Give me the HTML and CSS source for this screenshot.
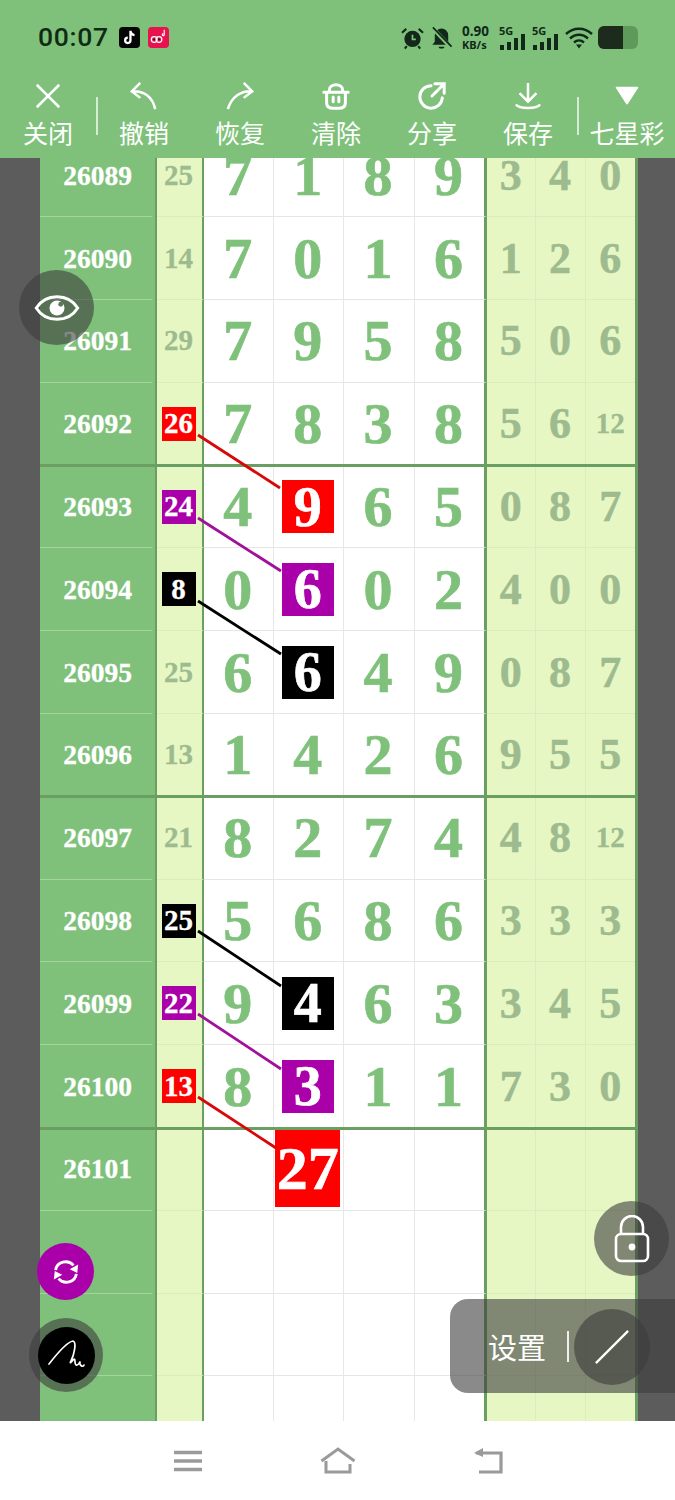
FILE: index.html
```html
<!DOCTYPE html>
<html lang="zh">
<head>
<meta charset="utf-8">
<title>七星彩</title>
<link rel="stylesheet" href="styles.css">
</head>
<body>
<div class="phone">
  <header class="top">
    <div class="status">
      <span class="time">00:07</span>
      <svg class="app" viewBox="0 0 22 22"><rect width="22" height="22" rx="4" fill="#050505"/><path d="M12 4v10a2.8 2.8 0 1 1-2.8-2.8M12 4.500c.4 2.400 1.900 3.800 4.300 4" fill="none" stroke="#fff" stroke-width="2.400"/></svg>
      <svg class="app" viewBox="0 0 22 22"><rect width="22" height="22" rx="4" fill="#e8124f"/><circle cx="6.500" cy="13" r="3" fill="none" stroke="#fff" stroke-width="1.300"/><circle cx="11.500" cy="13" r="3" fill="none" stroke="#fff" stroke-width="1.300"/><circle cx="6.500" cy="13" r="1" fill="#111"/><circle cx="11.500" cy="13" r="1" fill="#111"/><path d="M17 3v5a1 1 0 1 1-1-1" fill="none" stroke="#fff" stroke-width="1.200"/></svg>
      <span class="grow"></span>
      <svg class="si alarm" viewBox="0 0 24 24"><circle cx="12" cy="13" r="8.500" fill="#12291a"/><path d="M12 8.500V13.500H15.500" fill="none" stroke="#7fc17b" stroke-width="1.800"/><path d="M1 6.500 5.500 2.500M23 6.500 18.500 2.500M6 20.500 4 23M18 20.500 20 23" stroke="#12291a" stroke-width="2.200"/></svg>
      <svg class="si bell" viewBox="0 0 24 24"><path d="M12 2a7 7 0 0 1 7 7v7l2.500 3h-19L5 16V9a7 7 0 0 1 7-7zM9 21h6a3 2 0 0 1-6 0z" fill="#12291a"/><path d="M2.500 1.500 22 22" stroke="#7fc17b" stroke-width="4"/><path d="M3 1 22.500 21" stroke="#12291a" stroke-width="1.800"/></svg>
      <span class="speed"><b>0.90</b><i>KB/s</i></span>
      <span class="net"><em>5G</em><svg viewBox="0 0 26 16"><path d="M1 11h4v5H1zM8 8h4v8H8zM15 4h4v12h-4zM22 0h4v16h-4z" fill="#12291a"/></svg></span>
      <span class="net"><em>5G</em><svg viewBox="0 0 26 16"><path d="M1 11h4v5H1zM8 8h4v8H8zM15 4h4v12h-4zM22 0h4v16h-4z" fill="#12291a"/></svg></span>
      <svg class="wifi" viewBox="0 0 28 22"><path d="M1 7.500C8.500.5 19.500.5 27 7.500M5 12c5.500-5 12.500-5 18 0M9 16c3-2.600 7-2.600 10 0" fill="none" stroke="#12291a" stroke-width="2.400"/><path d="M11 18h6l-3 4z" fill="#12291a"/></svg>
      <span class="batt"><span class="fill"></span></span>
    </div>
    <nav class="tools">
      <div class="tool"><svg viewBox="0 0 32 32"><path d="M4 4 28 28M28 4 4 28"/></svg><span>关闭</span></div>
      <div class="tool bar"><svg viewBox="0 0 32 32"><path d="M12 2 3 11l9 7M3 11c12-1 22 5 25 19"/></svg><span>撤销</span></div>
      <div class="tool"><svg viewBox="0 0 32 32"><path d="M20 2l9 9-9 7M29 11C17 10 7 17 3 30"/></svg><span>恢复</span></div>
      <div class="tool"><svg viewBox="0 0 32 32"><path class="thick" d="M3 12H29M9 12V9a7 5 0 0 1 14 0v3M6 12v11c0 4 2 6 6 6h8c4 0 6-2 6-6V12M13 17v5M19 17v5"/></svg><span>清除</span></div>
      <div class="tool"><svg viewBox="0 0 32 32"><path class="thick" d="M15 5A12 12 0 1 0 27 18M19 3h10v10M29 3 16 16"/></svg><span>分享</span></div>
      <div class="tool"><svg viewBox="0 0 32 32"><path d="M16 2v19M7 13l9 9 9-9M3 25c4 5 22 5 26 0"/></svg><span>保存</span></div>
      <div class="tool bar-l"><svg viewBox="0 0 32 32"><path class="solid" d="M5 7h22L16 24z"/></svg><span>七星彩</span></div>
    </nav>
  </header>

  <main class="sheet">
    <div class="table">
      <div class="row"><div class="id">26089</div><div class="lead">25</div><div class="n">7</div><div class="n">1</div><div class="n">8</div><div class="n">9</div><div class="p">3</div><div class="p">4</div><div class="p">0</div></div>
      <div class="row"><div class="id">26090</div><div class="lead">14</div><div class="n">7</div><div class="n">0</div><div class="n">1</div><div class="n">6</div><div class="p">1</div><div class="p">2</div><div class="p">6</div></div>
      <div class="row"><div class="id">26091</div><div class="lead">29</div><div class="n">7</div><div class="n">9</div><div class="n">5</div><div class="n">8</div><div class="p">5</div><div class="p">0</div><div class="p">6</div></div>
      <div class="row sec"><div class="id">26092</div><div class="lead"><b class="tag red">26</b></div><div class="n">7</div><div class="n">8</div><div class="n">3</div><div class="n">8</div><div class="p">5</div><div class="p">6</div><div class="p sm">12</div></div>
      <div class="row"><div class="id">26093</div><div class="lead"><b class="tag pur">24</b></div><div class="n">4</div><div class="n"><b class="hit red">9</b></div><div class="n">6</div><div class="n">5</div><div class="p">0</div><div class="p">8</div><div class="p">7</div></div>
      <div class="row"><div class="id">26094</div><div class="lead"><b class="tag blk">8</b></div><div class="n">0</div><div class="n"><b class="hit pur">6</b></div><div class="n">0</div><div class="n">2</div><div class="p">4</div><div class="p">0</div><div class="p">0</div></div>
      <div class="row"><div class="id">26095</div><div class="lead">25</div><div class="n">6</div><div class="n"><b class="hit blk">6</b></div><div class="n">4</div><div class="n">9</div><div class="p">0</div><div class="p">8</div><div class="p">7</div></div>
      <div class="row sec"><div class="id">26096</div><div class="lead">13</div><div class="n">1</div><div class="n">4</div><div class="n">2</div><div class="n">6</div><div class="p">9</div><div class="p">5</div><div class="p">5</div></div>
      <div class="row"><div class="id">26097</div><div class="lead">21</div><div class="n">8</div><div class="n">2</div><div class="n">7</div><div class="n">4</div><div class="p">4</div><div class="p">8</div><div class="p sm">12</div></div>
      <div class="row"><div class="id">26098</div><div class="lead"><b class="tag blk">25</b></div><div class="n">5</div><div class="n">6</div><div class="n">8</div><div class="n">6</div><div class="p">3</div><div class="p">3</div><div class="p">3</div></div>
      <div class="row"><div class="id">26099</div><div class="lead"><b class="tag pur">22</b></div><div class="n">9</div><div class="n"><b class="hit blk">4</b></div><div class="n">6</div><div class="n">3</div><div class="p">3</div><div class="p">4</div><div class="p">5</div></div>
      <div class="row sec"><div class="id">26100</div><div class="lead"><b class="tag red">13</b></div><div class="n">8</div><div class="n"><b class="hit pur">3</b></div><div class="n">1</div><div class="n">1</div><div class="p">7</div><div class="p">3</div><div class="p">0</div></div>
      <div class="row"><div class="id">26101</div><div class="lead"></div><div class="n"></div><div class="n"><b class="hit big red">27</b></div><div class="n"></div><div class="n"></div><div class="p"></div><div class="p"></div><div class="p"></div></div>
      <div class="row"><div class="id"></div><div class="lead"></div><div class="n"></div><div class="n"></div><div class="n"></div><div class="n"></div><div class="p"></div><div class="p"></div><div class="p"></div></div>
      <div class="row"><div class="id"></div><div class="lead"></div><div class="n"></div><div class="n"></div><div class="n"></div><div class="n"></div><div class="p"></div><div class="p"></div><div class="p"></div></div>
      <div class="row"><div class="id"></div><div class="lead"></div><div class="n"></div><div class="n"></div><div class="n"></div><div class="n"></div><div class="p"></div><div class="p"></div><div class="p"></div></div>
    </div>

    <svg class="links" viewBox="0 0 675 1263">
      <path class="l-red" d="M198 277 280 330"/>
      <path class="l-pur" d="M198 360 281 413"/>
      <path class="l-blk" d="M198 443 281 496"/>
      <path class="l-blk" d="M198 773 281 828"/>
      <path class="l-pur" d="M198 856 281 911"/>
      <path class="l-red" d="M198 939 276 990"/>
    </svg>

    <div class="fab eye"><svg viewBox="0 0 48 34"><path d="M2 17C12 1 36 1 46 17 36 33 12 33 2 17z" fill="none" stroke="#fff" stroke-width="3.200"/><circle cx="24" cy="17" r="8" fill="#fff"/><circle cx="28" cy="13" r="2.600" fill="#5a7a58"/></svg></div>
    <div class="fab lock"><svg viewBox="0 0 36 48"><path d="M7 20V12a11 11 0 0 1 22 0v8" fill="none" stroke="#fff" stroke-width="2.600"/><rect x="2" y="19" width="32" height="27" rx="5" fill="none" stroke="#fff" stroke-width="2.600"/><circle cx="18" cy="32" r="3.400" fill="#fff"/></svg></div>
    <div class="fab sync"><svg viewBox="0 0 32 32"><path d="M5 14C6 5 18 2 24 9M27 18C26 27 14 30 8 23" fill="none" stroke="#fff" stroke-width="3"/><path d="M29 8 28 17 20 13zM3 24 4 15 12 19z" fill="#fff"/></svg></div>
    <div class="fab pen"><span class="pen-in"><svg viewBox="0 0 40 40"><path d="M3 29C10 20 21 7 27 6 31 7 28 20 25 26c-2 4 1 0 3-2 2 0 0 5 2 6 2 1 3-2 4-3-1 3 3 6 4 3" fill="none" stroke="#fff" stroke-width="1.700" stroke-linecap="round" stroke-linejoin="round"/></svg></span></div>
    <div class="pill"><span class="pill-t">设置</span><span class="pill-sep"></span><span class="pill-c"><svg viewBox="0 0 38 38"><path d="M2 36 36 2" stroke="#fff" stroke-width="2.400"/></svg></span></div>
  </main>

  <footer class="nav">
    <svg class="burger" viewBox="0 0 28 22"><path d="M0 2.500h28M0 11h28M0 19.500h28" stroke="#9a9a9a" stroke-width="3.400"/></svg>
    <svg class="home" viewBox="0 0 36 28"><path d="M1.500 14 18 2 34.500 14M6 14v11h24v-8" fill="none" stroke="#9a9a9a" stroke-width="3"/></svg>
    <svg class="back" viewBox="0 0 30 26"><path d="M3 5h25v19H6" fill="none" stroke="#9a9a9a" stroke-width="3.200"/><path d="M10 0 1 5l9 4" fill="#9a9a9a"/></svg>
  </footer>
</div>
</body>
</html>
```

FILE: styles.css
```css
* { box-sizing: border-box; }
html, body { margin: 0; padding: 0; }
body { background: #fff; font-family: "Noto Sans CJK SC", "Noto Sans", sans-serif; }
.phone { width: 675px; height: 1500px; display: flex; flex-direction: column; overflow: hidden; }

/* header */
.top { height: 158px; flex: none; background: #7fc17b; color: #fff; overflow: hidden; }
.status { height: 72px; display: flex; align-items: center; padding: 3px 37px 0 38px; color: #12291a; }
.time { font: 500 26.500px/1 "Roboto", sans-serif; letter-spacing: .7px; color: #0f2b14; margin-right: 10px; }
.app { width: 21px; height: 21px; margin-right: 8px; }
.grow { flex: 1; }
.si { width: 23px; height: 24px; margin-right: 6px; }
.bell { margin-right: 9px; }
.speed { display: flex; flex-direction: column; gap: 1px; font-family: "Noto Sans", sans-serif; margin-right: 9px; width: 28px; }
.speed b { font-size: 13.500px; line-height: 13px; font-weight: 700; }
.speed i { font-size: 11px; line-height: 11px; font-style: normal; font-weight: 700; }
.net { position: relative; width: 26px; height: 24px; margin-right: 7px; display: block; }
.net em { position: absolute; left: 0; top: 0; font: 700 11px/10px "Noto Sans", sans-serif; }
.net svg { position: absolute; left: 0; bottom: 0; width: 26px; height: 16px; }
.wifi { width: 28px; height: 23px; margin-right: 5px; }
.batt { width: 40px; height: 23px; border-radius: 6px; background: #5e9a5b; overflow: hidden; display: block; }
.fill { display: block; width: 25px; height: 23px; background: #1c2b1c; }

.tools { display: flex; margin-top: 9px; }
.tool { width: 96px; flex: none; display: flex; flex-direction: column; align-items: center; position: relative; }
.tool svg { width: 30px; height: 30px; fill: none; stroke: #fff; stroke-width: 2.700; }
.tool .solid { fill: #fff; stroke: #fff; stroke-width: 2; stroke-linejoin: round; }
.tool .thick { stroke-width: 3.200; stroke-linecap: round; }
.tool span { font-size: 25px; line-height: 34px; margin-top: 4px; font-weight: 400; white-space: nowrap; }
.bar::before { content: ""; position: absolute; left: 0; top: 16px; width: 2px; height: 38px; background: #d7ecd4; }
.bar-l { margin-left: 3px; }
.bar-l::before { content: ""; position: absolute; left: -2px; top: 16px; width: 2px; height: 38px; background: #d7ecd4; }

/* sheet */
.sheet { flex: 1; position: relative; overflow: hidden; background: #5c5c5c; }
.table { margin: -23.500px 0 0 40px; width: 598px; border-right: 3px solid #6b9e63; }
.row { height: 82.800px; display: grid; grid-template-columns: 117px 47px 70px 70px 70.500px 72.500px 48.500px 50px 49.500px; position: relative; font-family: "Liberation Serif", serif; font-weight: 700; }
.row > div { display: flex; align-items: center; justify-content: center; border-bottom: 1px solid #e4e7e4; position: relative; }
.id { background: #7fc17b; color: #fff; font-size: 27.500px; -webkit-text-stroke: .3px #fff; border-right: 2.500px solid #6b9e63; border-bottom: 0 !important; }
.id::after { content: ""; position: absolute; left: 0; right: 3px; bottom: 0; height: 1px; background: #a4d4a0; }
.lead { background: #e6f7c3; color: #9dbb8f; font-size: 29px; -webkit-text-stroke: .3px #9dbb8f; border-right: 2.500px solid #6b9e63; border-bottom-color: #dcecbb !important; padding-right: 2px; }
.n { background: #fff; color: #7fc17b; font-size: 58px; -webkit-text-stroke: .7px #7fc17b; border-right: 1px solid #e8e8e8; padding-right: 1.500px; }
.n:nth-child(6) { border-right: 3px solid #6b9e63; }
.p { background: #e6f7c3; color: #9dbb8f; font-size: 44px; -webkit-text-stroke: .5px #9dbb8f; border-right: 1px solid #dcecbb; border-bottom-color: #dcecbb !important; }
.p:last-child { border-right: 0; }
.p.sm { font-size: 29px; -webkit-text-stroke: .3px #9dbb8f; }
.sec::after { content: ""; position: absolute; left: 0; right: 0; bottom: -1.500px; height: 3px; background: #6b9e63; z-index: 1; }
.sec .id::after { display: none; }
.tag { width: 34px; height: 34px; display: flex; align-items: center; justify-content: center; color: #fff; font-size: 29px; -webkit-text-stroke: .3px #fff; }
.hit { width: 52px; height: 53px; display: flex; align-items: center; justify-content: center; color: #fff; font-size: 56px; -webkit-text-stroke: .7px #fff; position: relative; z-index: 2; }
.hit.big { width: 65px; height: 77px; font-size: 62px; }
.red { background: #f00; }
.pur { background: #a0a; }
.blk { background: #000; }

.links { position: absolute; left: 0; top: 0; width: 675px; height: 1263px; z-index: 3; }
.links path { fill: none; stroke-width: 2.800; }
.l-red { stroke: #d80808; }
.l-pur { stroke: #a0109a; }
.l-blk { stroke: #000; }

.fab { position: absolute; z-index: 4; border-radius: 50%; display: flex; align-items: center; justify-content: center; }
.eye { left: 19px; top: 112px; width: 75px; height: 75px; background: rgba(60,60,60,.6); }
.eye svg { width: 46px; height: 32px; }
.lock { left: 594px; top: 1043px; width: 75px; height: 75px; background: rgba(60,60,60,.6); }
.lock svg { width: 36px; height: 48px; }
.sync { left: 37px; top: 1085px; width: 57px; height: 57px; background: #a0a; }
.sync svg { width: 30px; height: 30px; }
.pen { left: 29px; top: 1160px; width: 74px; height: 74px; background: rgba(60,60,60,.6); }
.pen-in { width: 57px; height: 57px; border-radius: 50%; background: #000; display: flex; align-items: center; justify-content: center; }
.pen-in svg { width: 40px; height: 40px; }
.pill { position: absolute; z-index: 4; left: 450px; top: 1141px; width: 240px; height: 94px; border-radius: 18px 0 0 18px; background: rgba(60,60,60,.6); display: flex; align-items: center; color: #fff; padding-left: 38px; }
.pill-t { font-size: 29px; font-weight: 400; line-height: 1; margin-right: 21px; }
.pill-sep { width: 2px; height: 31px; background: #eee; }
.pill-c { position: absolute; left: 124px; top: 10px; width: 76px; height: 76px; border-radius: 50%; background: rgba(60,60,60,.6); display: flex; align-items: center; justify-content: center; }
.pill-c svg { width: 36px; height: 36px; }

/* nav */
.nav { height: 79px; flex: none; background: #fff; position: relative; }
.nav svg { position: absolute; }
.burger { left: 174px; top: 29px; width: 28px; height: 22px; }
.home { left: 320px; top: 26px; width: 36px; height: 28px; }
.back { left: 473px; top: 27px; width: 30px; height: 26px; }
```
